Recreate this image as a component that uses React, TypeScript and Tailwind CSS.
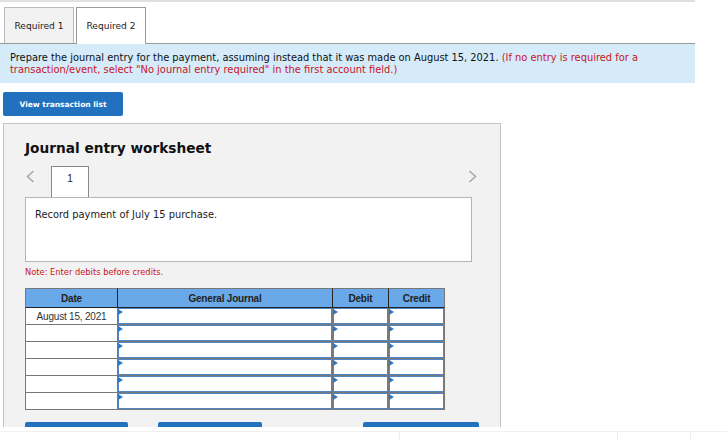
import React from "react";

const verdana = "font-['DejaVu_Sans',Verdana,sans-serif]";
const rows = ["August 15, 2021", "", "", "", "", ""];

const Arrow = () => (
  <span className="absolute left-0 top-px h-0 w-0 border-y-[3px] border-l-[5px] border-y-transparent border-l-[#2b78c5]" />
);

const EntryCell = () => (
  <td className="relative h-[17px] border-r border-b border-[#777] p-0">
    <Arrow />
    <div className="h-[16px] border border-[#4f86c6] bg-white" />
  </td>
);

const App: React.FC = () => {
  return (
    <div className={`relative h-[440px] w-[727px] overflow-hidden bg-white text-[#222] ${verdana}`}>
      <div className="h-[2px] w-[695px] bg-[#e0e0e0]" />

      {/* Tabs */}
      <div className="flex h-[42px] w-[695px] items-end gap-[2px] border-b border-[#999] pl-[4px]">
        <button className="h-[36px] w-[70px] border border-b-0 border-[#bbb] bg-[#f2f2f2] pt-[2px] text-[9.1px]">
          Required 1
        </button>
        <button className="relative top-px h-[37px] w-[70px] border border-b-0 border-[#999] bg-white pt-[2px] text-[9.1px]">
          Required 2
        </button>
      </div>

      {/* Instructions */}
      <div className="h-[39px] w-[695px] bg-[#d5ebfa] pt-[8px] pr-[40px] pl-[10px] text-[9.86px] leading-[12px] text-[#111]">
        Prepare the journal entry for the payment, assuming instead that it was made on August 15, 2021.{" "}
        <span className="text-[9.9px] text-[#c8141e]">
          (If no entry is required for a transaction/event, select "No journal entry required" in the first account field.)
        </span>
      </div>

      <button className="mt-[9px] ml-[3px] block h-[24px] w-[120px] rounded-[2px] bg-[#2271bf] pt-px text-[7.5px] font-bold text-white">
        View transaction list
      </button>

      {/* Worksheet panel */}
      <div className="mt-[7px] ml-[3px] h-[304px] w-[498px] overflow-hidden border-x border-t border-[#c4c4c4] bg-[#f2f2f2] pl-[21px]">
        <h2 className="pt-[15px] text-[13.7px] leading-[18px] font-bold text-[#111]">Journal entry worksheet</h2>

        <div className="mt-[9px] flex h-[31px] w-[452px] items-start">
          <svg width="9" height="13" viewBox="0 0 9 13" className="mt-[4px] ml-[1px] text-[#aaa]">
            <path d="M7.5 1 L1.5 6.5 L7.5 12" fill="none" stroke="currentColor" strokeWidth="1.6" />
          </svg>
          <div className="relative z-10 ml-[16px] h-[31px] w-[38px] border border-b-0 border-[#888] bg-white pt-[6px] text-center font-['Liberation_Sans',Arial,sans-serif] text-[10px] leading-[12px]">
            1
          </div>
          <svg width="9" height="13" viewBox="0 0 9 13" className="mt-[4px] ml-auto text-[#aaa]">
            <path d="M1.5 1 L7.5 6.5 L1.5 12" fill="none" stroke="currentColor" strokeWidth="1.6" />
          </svg>
        </div>

        <div className="h-[65px] w-[447px] border border-[#b5b5b5] bg-white pt-[11px] pl-[9px] text-[9.9px] leading-[12px] text-[#222]">
          Record payment of July 15 purchase.
        </div>

        <p className="mt-[5px] text-[8.3px] leading-[10px] text-[#c8141e]">Note: Enter debits before credits.</p>

        {/* Journal table */}
        <table className="mt-[11px] w-[420px] table-fixed border-separate border-spacing-0 font-['Liberation_Sans',Arial,sans-serif] text-[10px] tracking-[-0.2px]">
          <thead>
            <tr className="h-[20px] bg-[#6aa9e9] font-bold text-[#222]">
              <th className="w-[93px] border-y border-r border-l border-[#777] border-r-[#222] border-b-[#222] p-0">Date</th>
              <th className="w-[215px] border-y border-r border-t-[#777] border-r-[#222] border-b-[#222] p-0">General Journal</th>
              <th className="w-[56px] border-y border-r border-t-[#777] border-r-[#222] border-b-[#222] p-0">Debit</th>
              <th className="w-[56px] border-y border-r border-t-[#777] border-r-[#777] border-b-[#222] p-0">Credit</th>
            </tr>
          </thead>
          <tbody>
            {rows.map((date, i) => (
              <tr key={i} className="h-[17px]">
                <td className="border-r border-b border-l border-[#777] bg-white p-0 text-center text-[#333]">{date}</td>
                <EntryCell />
                <EntryCell />
                <EntryCell />
              </tr>
            ))}
          </tbody>
        </table>

        {/* Bottom buttons, cut off by the panel edge */}
        <div className="mt-[12px] flex">
          <div className="h-[6px] w-[103px] rounded-t-[2px] bg-[#2271bf]" />
          <div className="ml-[30px] h-[6px] w-[104px] rounded-t-[2px] bg-[#2271bf]" />
          <div className="ml-[101px] h-[6px] w-[116px] rounded-t-[2px] bg-[#2271bf]" />
        </div>
      </div>

      {/* Footer edge of the page */}
      <div className="mt-[4px] flex h-[9px] border-t border-[#f0f0f0]">
        <div className="ml-[399px] h-full w-px bg-[#eee]" />
        <div className="ml-[217px] h-full w-px bg-[#eee]" />
        <div className="ml-[72px] h-full w-px bg-[#eee]" />
      </div>
    </div>
  );
};

export default App;
